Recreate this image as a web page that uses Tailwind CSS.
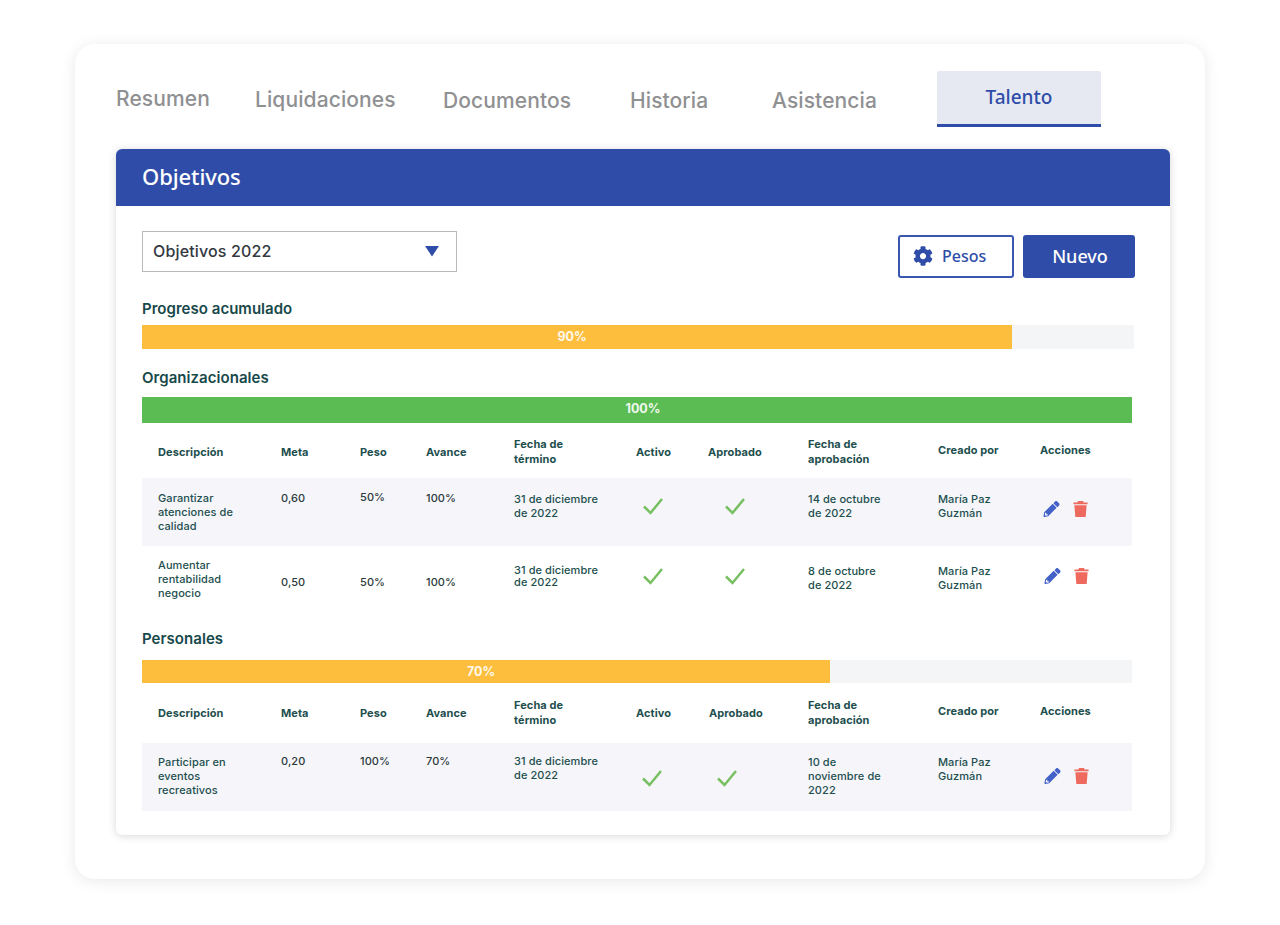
<!DOCTYPE html>
<html lang="es">
<head>
<meta charset="utf-8">
<script src="https://cdn.jsdelivr.net/npm/@tailwindcss/browser@4"></script>
<title>Objetivos</title>
</head>
<body class="bg-white font-['Inter',sans-serif]">
<div class="w-[1280px] h-[925px] pt-[44px] pl-[75px]">
  <div class="w-[1130px] h-[835px] bg-white rounded-[20px] shadow-[0_2px_16px_rgba(0,0,0,0.09)] pl-[41px] pt-[27px]">
    <!-- tabs -->
    <div class="flex h-[78px] items-start text-[#8f9092] text-[21px] font-[550] tracking-[0.1px] leading-[26px]">
      <div class="w-[139px] pt-[15px]">Resumen</div>
      <div class="w-[188px] pt-[16px]">Liquidaciones</div>
      <div class="w-[187px] pt-[17px]">Documentos</div>
      <div class="w-[142px] pt-[17px]">Historia</div>
      <div class="w-[165px] pt-[17px]">Asistencia</div>
      <div class="w-[164px] h-[56px] bg-[#e6e9f2] border-b-[3px] border-[#2f4da8] text-center text-[#2f4da8] font-['Noto_Sans',sans-serif] font-medium text-[19px] tracking-normal pt-[13px] rounded-t-[2px]">Talento</div>
    </div>
    <!-- panel -->
    <div class="w-[1054px] h-[686px] bg-white rounded-[6px] shadow-[0_1px_8px_rgba(0,0,0,0.16)]">
      <div class="h-[57px] bg-[#2f4da8] rounded-t-[6px] pl-[26px] pt-[12px] text-white font-['Noto_Sans',sans-serif] font-medium text-[22px] tracking-[-0.1px] leading-[30px]">Objetivos</div>
      <div class="pl-[26px]">
        <div class="flex h-[93px] items-start">
          <div class="mt-[25px] w-[315px] h-[41px] border border-[#b9b9bb] flex items-center justify-between pl-[10px] pr-[16px] pb-[1px] text-[#33383f] text-[16px] tracking-[0.15px] font-medium">
            <span>Objetivos 2022</span>
            <svg class="w-[16px] h-[12px]" viewBox="0 0 16 12"><path d="M1 1h14L8 11.5z" fill="#2f4da8"/></svg>
          </div>
          <div class="ml-[441px] mt-[29px] w-[116px] h-[43px] border-2 border-[#3a57ae] rounded-[3px] flex items-center pl-[13px] pb-[1px] text-[#2f4da8] font-['Noto_Sans',sans-serif] font-medium text-[16px]">
            <svg class="w-[20px] h-[20px] mr-[9px]" viewBox="0 0 512 512"><path fill="#2f4da8" d="M487.4 315.7l-42.6-24.6c4.3-23.2 4.3-47 0-70.2l42.6-24.6c4.9-2.8 7.1-8.6 5.5-14-11.1-35.6-30-67.8-54.7-94.6-3.8-4.1-10-5.1-14.8-2.3L380.8 110c-17.9-15.4-38.5-27.3-60.8-35.1V25.8c0-5.6-3.9-10.5-9.4-11.7-36.7-8.2-74.3-7.8-109.2 0-5.5 1.2-9.4 6.1-9.4 11.7V75c-22.2 7.9-42.8 19.8-60.8 35.1L88.7 85.5c-4.9-2.8-11-1.9-14.8 2.3-24.7 26.7-43.6 58.9-54.7 94.6-1.7 5.4.6 11.2 5.5 14L67.3 221c-4.3 23.2-4.3 47 0 70.2l-42.6 24.6c-4.9 2.8-7.1 8.6-5.5 14 11.1 35.6 30 67.8 54.7 94.6 3.8 4.1 10 5.1 14.8 2.3l42.6-24.6c17.9 15.4 38.5 27.3 60.8 35.1v49.2c0 5.6 3.9 10.5 9.4 11.7 36.7 8.2 74.3 7.8 109.2 0 5.5-1.2 9.4-6.1 9.4-11.7v-49.2c22.2-7.9 42.8-19.8 60.8-35.1l42.6 24.6c4.9 2.8 11 1.9 14.8-2.3 24.7-26.7 43.6-58.9 54.7-94.6 1.5-5.5-.7-11.3-5.6-14.1zM256 336c-44.1 0-80-35.9-80-80s35.9-80 80-80 80 35.9 80 80-35.9 80-80 80z"/></svg>
            <span>Pesos</span>
          </div>
          <div class="ml-[9px] mt-[29px] w-[112px] h-[43px] bg-[#2f4da8] rounded-[3px] flex items-center justify-center pl-[2px] pb-[1px] text-white font-['Noto_Sans',sans-serif] font-medium text-[18px]">Nuevo</div>
        </div>
        <div class="h-[26px] pt-[1px] text-[#17484a] text-[15px] tracking-[0.03px] font-semibold leading-[18px]">Progreso acumulado</div>
        <div class="w-[992px] h-[24px] bg-[#f3f5f7] rounded-r-[2px]">
          <div class="w-[870px] h-full pr-[10px] bg-[#fdbd3d] text-white/90 text-[12.5px] font-bold flex items-center justify-center">90%</div>
        </div>
        <div class="h-[48px] pt-[20px] text-[#17484a] text-[15px] tracking-[0.05px] font-semibold leading-[18px]">Organizacionales</div>
        <div class="w-[990px] h-[26px] pl-[12px] pb-[2px] bg-[#5cbc54] text-white/90 text-[12.5px] font-bold flex items-center justify-center">100%</div>

        <!-- table 1 -->
        <div class="w-[990px] text-[#1d4f4e] text-[11px] tracking-[0.08px]">
          <div class="grid grid-cols-[123px_79px_66px_88px_122px_72px_100px_130px_102px_1fr] h-[55px] pl-[16px] font-bold leading-[15px]">
            <div class="pt-[22px]">Descripción</div>
            <div class="pt-[22px]">Meta</div>
            <div class="pt-[22px]">Peso</div>
            <div class="pt-[22px]">Avance</div>
            <div class="pt-[14px]">Fecha de<br>término</div>
            <div class="pt-[22px]">Activo</div>
            <div class="pt-[22px]">Aprobado</div>
            <div class="pt-[14px]">Fecha de<br>aprobación</div>
            <div class="pt-[20px]">Creado por</div>
            <div class="pt-[20px]">Acciones</div>
          </div>
          <div class="grid grid-cols-[123px_79px_66px_88px_122px_72px_100px_130px_102px_1fr] h-[68px] pl-[16px] bg-[#f5f5fa] font-medium leading-[14px]">
            <div class="pt-[13px]">Garantizar<br>atenciones de<br>calidad</div>
            <div class="pt-[13px] text-[#2c3a3c]">0,60</div>
            <div class="pt-[12px] text-[#2c3a3c]">50%</div>
            <div class="pt-[13px] text-[#2c3a3c]">100%</div>
            <div class="pt-[14px]">31 de diciembre<br>de 2022</div>
            <div class="pt-[19px] pl-[6px]"><svg class="w-[22px] h-[18px]" viewBox="0 0 22 18"><path d="M2 9.5l6.5 6.5L20 2" fill="none" stroke="#78bf62" stroke-width="2.5"/></svg></div>
            <div class="pt-[19px] pl-[16px]"><svg class="w-[22px] h-[18px]" viewBox="0 0 22 18"><path d="M2 9.5l6.5 6.5L20 2" fill="none" stroke="#78bf62" stroke-width="2.5"/></svg></div>
            <div class="pt-[14px]">14 de octubre<br>de 2022</div>
            <div class="pt-[14px]">María Paz<br>Guzmán</div>
            <div class="pt-[23px] pl-[3px] flex items-start">
              <svg class="w-[17px] h-[16px]" viewBox="0 0 512 512"><path fill="#4361c8" d="M497.9 142.1l-46.1 46.1c-4.7 4.7-12.3 4.7-17 0l-111-111c-4.7-4.7-4.7-12.3 0-17l46.1-46.1c18.7-18.7 49.1-18.7 67.9 0l60.1 60.1c18.8 18.7 18.8 49.1 0 67.9zM284.2 99.8L21.6 362.4.4 483.9c-2.9 16.4 11.4 30.6 27.8 27.8l121.5-21.3 262.6-262.6c4.7-4.7 4.7-12.3 0-17l-111-111c-4.8-4.7-12.4-4.7-17.1 0zM88 424h48v36.3l-64.5 11.3-31.1-31.1L51.7 376H88v48z"/></svg>
              <svg class="ml-[13px] w-[15px] h-[16px]" viewBox="0 0 15 17"><path fill="#ee6a5f" d="M5 0h5l1 1.5h4v2H0v-2h4zM1 4.5h13L13 17H2z"/></svg>
            </div>
          </div>
          <div class="grid grid-cols-[123px_79px_66px_88px_122px_72px_100px_130px_102px_1fr] h-[68px] pl-[16px] font-medium leading-[14px]">
            <div class="pt-[12px]">Aumentar<br>rentabilidad<br>negocio</div>
            <div class="pt-[29px] text-[#2c3a3c]">0,50</div>
            <div class="pt-[29px] text-[#2c3a3c]">50%</div>
            <div class="pt-[29px] text-[#2c3a3c]">100%</div>
            <div class="pt-[18px] leading-[12px]">31 de diciembre<br>de 2022</div>
            <div class="pt-[21px] pl-[6px]"><svg class="w-[22px] h-[18px]" viewBox="0 0 22 18"><path d="M2 9.5l6.5 6.5L20 2" fill="none" stroke="#78bf62" stroke-width="2.5"/></svg></div>
            <div class="pt-[21px] pl-[16px]"><svg class="w-[22px] h-[18px]" viewBox="0 0 22 18"><path d="M2 9.5l6.5 6.5L20 2" fill="none" stroke="#78bf62" stroke-width="2.5"/></svg></div>
            <div class="pt-[18px]">8 de octubre<br>de 2022</div>
            <div class="pt-[18px]">María Paz<br>Guzmán</div>
            <div class="pt-[22px] pl-[4px] flex items-start">
              <svg class="w-[17px] h-[16px]" viewBox="0 0 512 512"><path fill="#4361c8" d="M497.9 142.1l-46.1 46.1c-4.7 4.7-12.3 4.7-17 0l-111-111c-4.7-4.7-4.7-12.3 0-17l46.1-46.1c18.7-18.7 49.1-18.7 67.9 0l60.1 60.1c18.8 18.7 18.8 49.1 0 67.9zM284.2 99.8L21.6 362.4.4 483.9c-2.9 16.4 11.4 30.6 27.8 27.8l121.5-21.3 262.6-262.6c4.7-4.7 4.7-12.3 0-17l-111-111c-4.8-4.7-12.4-4.7-17.1 0zM88 424h48v36.3l-64.5 11.3-31.1-31.1L51.7 376H88v48z"/></svg>
              <svg class="ml-[13px] w-[15px] h-[16px]" viewBox="0 0 15 17"><path fill="#ee6a5f" d="M5 0h5l1 1.5h4v2H0v-2h4zM1 4.5h13L13 17H2z"/></svg>
            </div>
          </div>
        </div>

        <div class="h-[46px] pt-[16px] text-[#17484a] text-[15px] tracking-[0.05px] font-semibold leading-[18px]">Personales</div>
        <div class="w-[990px] h-[23px] bg-[#f3f5f7]">
          <div class="w-[688px] h-full pr-[10px] pt-[1px] bg-[#fdbd3d] text-white/90 text-[12.5px] font-bold flex items-center justify-center">70%</div>
        </div>

        <!-- table 2 -->
        <div class="w-[990px] text-[#1d4f4e] text-[11px] tracking-[0.08px]">
          <div class="grid grid-cols-[123px_79px_66px_88px_122px_72px_100px_130px_102px_1fr] h-[60px] pl-[16px] font-bold leading-[15px]">
            <div class="pt-[23px]">Descripción</div>
            <div class="pt-[23px]">Meta</div>
            <div class="pt-[23px]">Peso</div>
            <div class="pt-[23px]">Avance</div>
            <div class="pt-[15px]">Fecha de<br>término</div>
            <div class="pt-[23px]">Activo</div>
            <div class="pt-[23px] pl-[1px]">Aprobado</div>
            <div class="pt-[15px]">Fecha de<br>aprobación</div>
            <div class="pt-[21px]">Creado por</div>
            <div class="pt-[21px]">Acciones</div>
          </div>
          <div class="grid grid-cols-[123px_79px_66px_88px_122px_72px_100px_130px_102px_1fr] h-[68px] pl-[16px] bg-[#f5f5fa] font-medium leading-[14px]">
            <div class="pt-[12px]">Participar en<br>eventos<br>recreativos</div>
            <div class="pt-[11px] text-[#2c3a3c]">0,20</div>
            <div class="pt-[11px] text-[#2c3a3c]">100%</div>
            <div class="pt-[11px] text-[#2c3a3c]">70%</div>
            <div class="pt-[11px]">31 de diciembre<br>de 2022</div>
            <div class="pt-[26px] pl-[5px]"><svg class="w-[22px] h-[18px]" viewBox="0 0 22 18"><path d="M2 9.5l6.5 6.5L20 2" fill="none" stroke="#78bf62" stroke-width="2.5"/></svg></div>
            <div class="pt-[26px] pl-[8px]"><svg class="w-[22px] h-[18px]" viewBox="0 0 22 18"><path d="M2 9.5l6.5 6.5L20 2" fill="none" stroke="#78bf62" stroke-width="2.5"/></svg></div>
            <div class="pt-[12px]">10 de<br>noviembre de<br>2022</div>
            <div class="pt-[12px]">María Paz<br>Guzmán</div>
            <div class="pt-[25px] pl-[4px] flex items-start">
              <svg class="w-[17px] h-[16px]" viewBox="0 0 512 512"><path fill="#4361c8" d="M497.9 142.1l-46.1 46.1c-4.7 4.7-12.3 4.7-17 0l-111-111c-4.7-4.7-4.7-12.3 0-17l46.1-46.1c18.7-18.7 49.1-18.7 67.9 0l60.1 60.1c18.8 18.7 18.8 49.1 0 67.9zM284.2 99.8L21.6 362.4.4 483.9c-2.9 16.4 11.4 30.6 27.8 27.8l121.5-21.3 262.6-262.6c4.7-4.7 4.7-12.3 0-17l-111-111c-4.8-4.7-12.4-4.7-17.1 0zM88 424h48v36.3l-64.5 11.3-31.1-31.1L51.7 376H88v48z"/></svg>
              <svg class="ml-[13px] w-[15px] h-[16px]" viewBox="0 0 15 17"><path fill="#ee6a5f" d="M5 0h5l1 1.5h4v2H0v-2h4zM1 4.5h13L13 17H2z"/></svg>
            </div>
          </div>
        </div>
      </div>
    </div>
  </div>
</div>
</body>
</html>
